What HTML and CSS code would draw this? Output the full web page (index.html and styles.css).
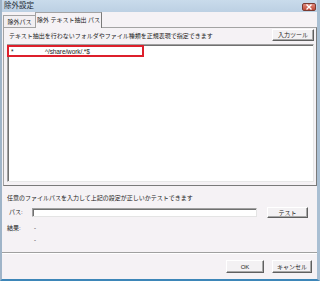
FILE: index.html
```html
<!DOCTYPE html>
<html lang="ja">
<head>
<meta charset="utf-8">
<link rel="stylesheet" href="styles.css">
</head>
<body>
<div class="window">
  <div class="titlebar">
    <span class="title">除外設定</span>
    <span class="close"><svg width="8" height="6" viewBox="0 0 8 6"><path d="M1.5 0.5 L6.5 5.5 M6.5 0.5 L1.5 5.5" stroke="#fff" stroke-width="1.4"/></svg></span>
  </div>
  <div class="client">
    <div class="tabs">
      <div class="tab">除外パス</div>
      <div class="tab active">除外 テキスト抽出 パス</div>
    </div>
    <div class="panel">
      <div class="panel-head">
        <span class="label">テキスト抽出を行わないフォルダやファイル種類を正規表現で指定できます</span>
        <button class="btn tool-btn">入力ツール</button>
      </div>
      <div class="list">
        <div class="row"><span class="c1">*</span><span class="c2">^/share/work/.*$</span></div>
        <div class="highlight"></div>
      </div>
    </div>
    <div class="lower">
      <div class="desc">任意のファイルパスを入力して上記の設定が正しいかテストできます</div>
      <div class="path-row">
        <span class="path-label">パス:</span>
        <span class="input"></span>
        <button class="btn test-btn">テスト</button>
      </div>
      <div class="result-row"><span class="res-label">結果:</span><span>-</span></div>
      <div class="result-row second"><span class="res-label"></span><span>-</span></div>
    </div>
    <div class="sep"></div>
    <div class="actions">
      <button class="btn ok-btn">OK</button>
      <button class="btn cancel-btn">キャンセル</button>
    </div>
  </div>
</div>
</body>
</html>
```
FILE: styles.css
```css
html, body {
  margin: 0;
  padding: 0;
  background: #b9cde0;
}
body {
  font-family: "Liberation Sans", "Noto Sans CJK JP", sans-serif;
  color: #1b1b1b;
}
.window {
  width: 320px;
  height: 281px;
  box-sizing: border-box;
  background: #bdd0e3;
  border-left: 2px solid #9fb4c8;
  border-right: 3px solid #a9bfd3;
  border-bottom: 2px solid #3d86b8;
  display: flex;
  flex-direction: column;
}
.titlebar {
  height: 12px;
  flex: none;
  display: flex;
  align-items: center;
  justify-content: space-between;
  background: linear-gradient(#c9dbeb, #bcd0e3);
}
.title {
  font-size: 7.5px;
  line-height: 12px;
  padding-left: 2px;
  color: #1e2a36;
}
.close {
  width: 14px;
  height: 8px;
  margin-top: 2px;
  margin-right: 1px;
  background: linear-gradient(#e08a7c, #c04a38);
  border: 1px solid #7a3a30;
  border-radius: 2px;
  box-sizing: border-box;
  display: flex;
  align-items: center;
  justify-content: center;
}
.close svg { display: block; }
.client {
  flex: 1;
  background: #f5f2f5;
  display: flex;
  flex-direction: column;
}
.tabs {
  height: 15px;
  display: flex;
  align-items: flex-end;
  padding-left: 1px;
  font-size: 6px;
}
.tab {
  height: 12px;
  box-sizing: border-box;
  width: 32px;
  border: 1px solid #a3a3a3;
  border-bottom: none;
  border-right: none;
  display: flex;
  align-items: center;
  justify-content: center;
  line-height: 1;
  background: #f2eff2;
}
.tab.active {
  width: 67px;
  height: 16px;
  margin-bottom: -1px;
  border-right: 1px solid #7a7a7a;
  background: #f5f2f5;
  position: relative;
  z-index: 1;
  padding-bottom: 2px;
}
.panel {
  margin-left: 1px;
  width: 314px;
  height: 159px;
  box-sizing: border-box;
  border: 1px solid #a3a3a3;
  border-right-color: #7a7a7a;
  border-bottom-color: #7a7a7a;
  display: flex;
  flex-direction: column;
}
.panel-head {
  height: 15px;
  display: flex;
  justify-content: space-between;
  align-items: flex-start;
  padding-left: 5px;
  padding-right: 2px;
}
.label {
  font-size: 6px;
  line-height: 15px;
  margin-top: 1px;
}
.btn {
  font-family: "Liberation Sans", "Noto Sans CJK JP", sans-serif;
  font-size: 6px;
  color: #1b1b1b;
  background: #f3f1f3;
  border: 1px solid;
  border-color: #ffffff #5f5f5f #5f5f5f #ffffff;
  box-shadow: inset -1px -1px #a8a8a8;
  padding: 0;
  margin: 0;
  box-sizing: border-box;
  line-height: 1;
  display: flex;
  align-items: center;
  justify-content: center;
}
.tool-btn {
  width: 42px;
  height: 12px;
  margin-top: 1px;
}
.list {
  position: relative;
  margin: 1px 2px 0 3px;
  height: 138px;
  box-sizing: border-box;
  background: #ffffff;
  border: 1px solid;
  border-color: #a0a0a0 #e8e8e8 #e8e8e8 #a0a0a0;
  box-shadow: inset 1px 1px #707070;
}
.row {
  display: flex;
  height: 11px;
  align-items: center;
  font-size: 6.5px;
  margin-top: 1px;
}
.c1 {
  width: 34px;
  padding-left: 3px;
}
.c2 {
  letter-spacing: -0.1px;
}
.highlight {
  position: absolute;
  left: -1px;
  top: 0px;
  width: 137px;
  height: 12px;
  box-sizing: border-box;
  border: 2px solid #dd1f2b;
}
.lower {
  padding-left: 5px;
  font-size: 6px;
}
.desc {
  margin-top: 7px;
  line-height: 10px;
}
.path-row {
  display: flex;
  align-items: flex-start;
  margin-top: 4px;
  height: 11px;
}
.path-label {
  width: 25px;
  padding-left: 2px;
  box-sizing: border-box;
  line-height: 11px;
}
.input {
  width: 225px;
  height: 9px;
  margin-top: 1px;
  box-sizing: border-box;
  background: #ffffff;
  border: 1px solid;
  border-color: #a0a0a0 #e4e4e4 #e4e4e4 #a0a0a0;
  box-shadow: inset 1px 1px #707070;
}
.test-btn {
  width: 41px;
  height: 11px;
  margin-left: 10px;
}
.result-row {
  display: flex;
  line-height: 10px;
  margin-top: 5px;
}
.result-row.second {
  margin-top: 2px;
}
.res-label {
  width: 27px;
}
.sep {
  margin-top: 7px;
  height: 1px;
  background: #a0a0a0;
  border-bottom: 1px solid #ffffff;
}
.actions {
  display: flex;
  justify-content: flex-end;
  gap: 8px;
  padding-right: 5px;
  margin-top: 6px;
}
.ok-btn {
  width: 38px;
  height: 13px;
}
.cancel-btn {
  width: 40px;
  height: 13px;
}
```
